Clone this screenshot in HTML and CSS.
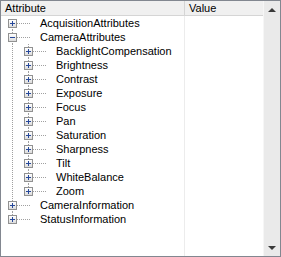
FILE: index.html
```html
<!DOCTYPE html>
<html lang="en">
<head>
    <meta charset="UTF-8">
    <title>Attributes</title>
    <link rel="stylesheet" href="styles.css">
</head>
<body>
    <div class="tree-view">
        <div class="content">
            <div class="header">
                <div class="col-attr">Attribute</div>
                <div class="col-value">Value</div>
            </div>
            <div class="body">
                <div class="rows">
                    <div class="row"><span class="node first"><span class="box plus"></span></span><span class="label">AcquisitionAttributes</span></div>
                    <div class="row"><span class="node"><span class="box minus"></span></span><span class="label">CameraAttributes</span></div>
                    <div class="row"><span class="guide line"></span><span class="node"><span class="box plus"></span></span><span class="label">BacklightCompensation</span></div>
                    <div class="row"><span class="guide line"></span><span class="node"><span class="box plus"></span></span><span class="label">Brightness</span></div>
                    <div class="row"><span class="guide line"></span><span class="node"><span class="box plus"></span></span><span class="label">Contrast</span></div>
                    <div class="row"><span class="guide line"></span><span class="node"><span class="box plus"></span></span><span class="label">Exposure</span></div>
                    <div class="row"><span class="guide line"></span><span class="node"><span class="box plus"></span></span><span class="label">Focus</span></div>
                    <div class="row"><span class="guide line"></span><span class="node"><span class="box plus"></span></span><span class="label">Pan</span></div>
                    <div class="row"><span class="guide line"></span><span class="node"><span class="box plus"></span></span><span class="label">Saturation</span></div>
                    <div class="row"><span class="guide line"></span><span class="node"><span class="box plus"></span></span><span class="label">Sharpness</span></div>
                    <div class="row"><span class="guide line"></span><span class="node"><span class="box plus"></span></span><span class="label">Tilt</span></div>
                    <div class="row"><span class="guide line"></span><span class="node"><span class="box plus"></span></span><span class="label">WhiteBalance</span></div>
                    <div class="row"><span class="guide line"></span><span class="node last"><span class="box plus"></span></span><span class="label">Zoom</span></div>
                    <div class="row"><span class="node"><span class="box plus"></span></span><span class="label">CameraInformation</span></div>
                    <div class="row"><span class="node last"><span class="box plus"></span></span><span class="label">StatusInformation</span></div>
                </div>
                <div class="values"></div>
            </div>
        </div>
        <div class="scrollbar">
            <span class="arrow up"></span>
            <span class="track"></span>
            <span class="arrow down"></span>
        </div>
    </div>
</body>
</html>
```

FILE: styles.css
```css
html, body {
    margin: 0;
    padding: 0;
    background: #fff;
}

body {
    font-family: "Liberation Sans", Arial, sans-serif;
    font-size: 11px;
    color: #000;
    overflow: hidden;
}

.tree-view {
    width: 281px;
    height: 257px;
    box-sizing: border-box;
    border: 1px solid #828790;
    display: grid;
    grid-template-columns: 1fr 17px;
    background: #fff;
}

.content {
    display: flex;
    flex-direction: column;
    min-width: 0;
}

.header {
    display: grid;
    grid-template-columns: 184px 1fr;
    height: 14px;
    background: #f0f0f0;
    border-bottom: 1px solid #d5d5d5;
    line-height: 14px;
}

.col-attr {
    padding-left: 4px;
    border-right: 1px solid #d5d5d5;
}

.col-value {
    padding-left: 4px;
}

.body {
    flex: 1;
    display: grid;
    grid-template-columns: 184px 1fr;
}

.rows {
    border-right: 1px solid #ececec;
    padding-left: 3px;
}

.row {
    display: flex;
    align-items: center;
    height: 14px;
    white-space: nowrap;
}

.guide {
    width: 16px;
    height: 14px;
    flex: none;
}

.guide.line {
    background-image: repeating-linear-gradient(to bottom, #a0a0a0 0 1px, transparent 1px 2px);
    background-repeat: no-repeat;
    background-position: 8px 0;
    background-size: 1px 14px;
}

.node {
    --dot-v: repeating-linear-gradient(to bottom, #a0a0a0 0 1px, transparent 1px 2px);
    --dot-h: repeating-linear-gradient(to right, #a0a0a0 0 1px, transparent 1px 2px);
    width: 36px;
    height: 14px;
    flex: none;
    display: flex;
    align-items: flex-start;
    background-image: var(--dot-h), var(--dot-v), var(--dot-v);
    background-repeat: no-repeat;
    background-position: 9px 7px, 8px 0, 8px 7px;
    background-size: 18px 1px, 1px 7px, 1px 7px;
}

.node.first {
    background-size: 18px 1px, 0 0, 1px 7px;
}

.node.last {
    background-size: 18px 1px, 1px 7px, 0 0;
}

.box {
    width: 7px;
    height: 7px;
    margin: 3px 0 0 4px;
    border: 1px solid #919191;
    background-color: #f4f4f4;
    background-repeat: no-repeat;
}

.box.plus {
    background-image: linear-gradient(#26489a, #26489a), linear-gradient(#26489a, #26489a), linear-gradient(#fff, #dcdcdc);
    background-position: 1px 3px, 3px 1px, 0 0;
    background-size: 5px 1px, 1px 5px, 7px 7px;
}

.box.minus {
    background-image: linear-gradient(#26489a, #26489a), linear-gradient(#fff, #dcdcdc);
    background-position: 1px 3px, 0 0;
    background-size: 5px 1px, 7px 7px;
}

.scrollbar {
    display: flex;
    flex-direction: column;
    background: #eaeaea;
    border-left: 1px solid #f6f6f6;
}

.arrow {
    height: 17px;
    display: flex;
    justify-content: center;
    align-items: center;
}

.arrow::before {
    content: "";
    width: 0;
    height: 0;
    border-left: 4px solid transparent;
    border-right: 4px solid transparent;
}

.arrow.up::before {
    border-bottom: 4px solid #3a3a3a;
}

.arrow.down::before {
    border-top: 4px solid #3a3a3a;
}

.track {
    flex: 1;
}
```
